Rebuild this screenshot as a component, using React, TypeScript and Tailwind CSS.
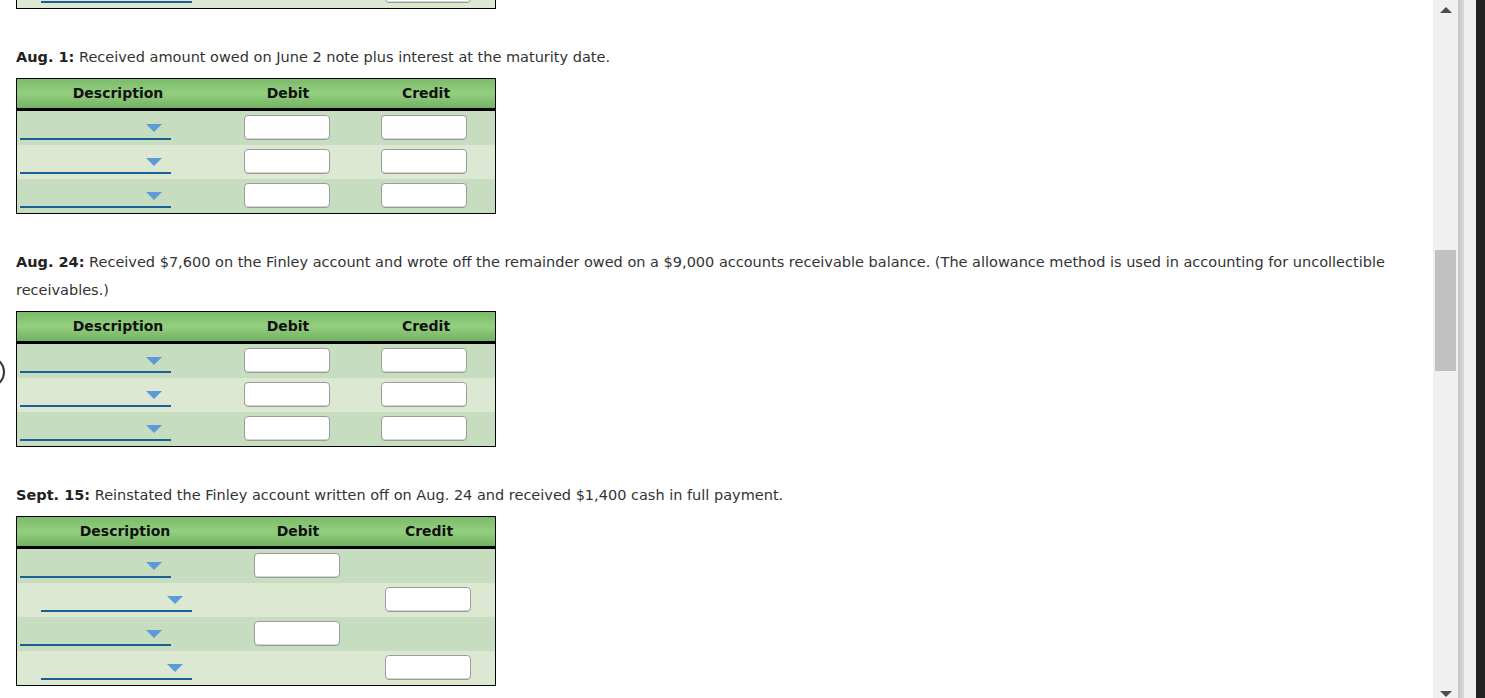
import React from 'react'

type Cell = 'both' | 'debit' | 'credit'

interface Row {
  indent?: boolean
  cell: Cell
}

interface Cols {
  head: [string, string, string]
  body: [string, string, string]
}

// header cells and body cells are sized apart, as the source table's columns don't line up exactly
const wideCols: Cols = {
  head: ['w-[202px]', 'w-[138px]', 'w-[138px]'],
  body: ['w-[201px]', 'w-[138px]', 'w-[136px]'],
}
const sept: Cols = {
  head: ['w-[216px]', 'w-[130px]', 'w-[132px]'],
  body: ['w-[216px]', 'w-[128px]', 'w-[134px]'],
}

function Dropdown({ indent }: { indent?: boolean }) {
  return (
    <div className={`flex h-full w-[151px] flex-col items-end pt-[13px] pb-[5px] ${indent ? 'ml-[24px]' : 'ml-[3px]'}`}>
      <div className="mr-[9px] h-0 w-0 border-x-[8px] border-t-[8px] border-x-transparent border-t-[#5b9bd6]" />
      <div className="flex-1" />
      <div className="h-[2px] w-full bg-[#1c5f98]" />
    </div>
  )
}

function Box() {
  return (
    <div className="h-[25px] w-[86px] rounded-[4px] border border-[#9c9c9c] bg-white shadow-[inset_0_-1px_0_#d4d4d4]" />
  )
}

function JournalTable({ cols, rows }: { cols: Cols; rows: Row[] }) {
  const [d, db, cr] = cols.body
  return (
    <div className="w-[480px] border border-black">
      <div className="flex h-[32px] items-center border-b-[3px] border-black bg-gradient-to-b from-[#7bbb69] via-[#93cf7f] to-[#72b262] text-[14px] font-bold text-[#111]">
        <div className={`${cols.head[0]} text-center`}>Description</div>
        <div className={`${cols.head[1]} text-center`}>Debit</div>
        <div className={`${cols.head[2]} text-center`}>Credit</div>
      </div>
      {rows.map((r, i) => (
        <div key={i} className={`flex h-[34px] ${i % 2 === 0 ? 'bg-[#c6ddbf]' : 'bg-[#dde8d3]'}`}>
          <div className={d}>
            <Dropdown indent={r.indent} />
          </div>
          <div className={`${db} flex justify-center pt-[4px]`}>{r.cell !== 'credit' && <Box />}</div>
          <div className={`${cr} flex justify-center pt-[4px]`}>{r.cell !== 'debit' && <Box />}</div>
        </div>
      ))}
    </div>
  )
}

function Prompt({ label, children }: { label: string; children: React.ReactNode }) {
  return (
    <p className="mt-[34px] mb-[7px] text-[14.5px] leading-[28px] text-[#333]">
      <b className="text-[#222]">{label}</b> {children}
    </p>
  )
}

export default function App() {
  const three: Row[] = [{ cell: 'both' }, { cell: 'both' }, { cell: 'both' }]
  const four: Row[] = [
    { cell: 'debit' },
    { cell: 'credit', indent: true },
    { cell: 'debit' },
    { cell: 'credit', indent: true },
  ]

  return (
    <div className="flex h-[698px] w-full overflow-hidden bg-white font-['DejaVu_Sans',Verdana,sans-serif]">
      <div className="relative flex-1 pl-[16px]">
        {/* cut-off circle at the left edge */}
        <div className="absolute left-[-27px] top-[356px] h-[32px] w-[32px] rounded-full border-2 border-[#333]" />

        {/* tail of the previous table, scrolled mostly out of view */}
        <div className="flex h-[9px] w-[480px] items-end overflow-hidden border-x border-b border-black bg-[#dde8d3]">
          <div className="flex h-[34px] w-full shrink-0">
            <div className="w-[216px]">
              <Dropdown indent />
            </div>
            <div className="w-[128px]" />
            <div className="flex w-[134px] justify-center pt-[4px]">
              <Box />
            </div>
          </div>
        </div>

        <Prompt label="Aug. 1:">Received amount owed on June 2 note plus interest at the maturity date.</Prompt>
        <JournalTable cols={wideCols} rows={three} />

        <Prompt label="Aug. 24:">
          Received $7,600 on the Finley account and wrote off the remainder owed on a $9,000 accounts receivable
          balance. (The allowance method is used in accounting for uncollectible receivables.)
        </Prompt>
        <JournalTable cols={wideCols} rows={three} />

        <Prompt label="Sept. 15:">
          Reinstated the Finley account written off on Aug. 24 and received $1,400 cash in full payment.
        </Prompt>
        <JournalTable cols={sept} rows={four} />
      </div>

      {/* scrollbar */}
      <div className="flex w-[25px] flex-col items-center bg-[#f0f0f0]">
        <div className="mt-[7px] h-0 w-0 border-x-[6px] border-b-[6px] border-x-transparent border-b-[#4d4d4d]" />
        <div className="mt-[237px] h-[121px] w-[21px] bg-[#c1c1c1]" />
        <div className="flex-1" />
        <div className="mb-[1px] h-0 w-0 border-x-[6px] border-t-[6px] border-x-transparent border-t-[#4d4d4d]" />
      </div>
      <div className="w-[6px] bg-gradient-to-r from-[#c4c4c4] to-[#dadada]" />
      <div className="w-[12px] bg-[#efefef]" />
      <div className="w-[9px] bg-[#222]" />
    </div>
  )
}
